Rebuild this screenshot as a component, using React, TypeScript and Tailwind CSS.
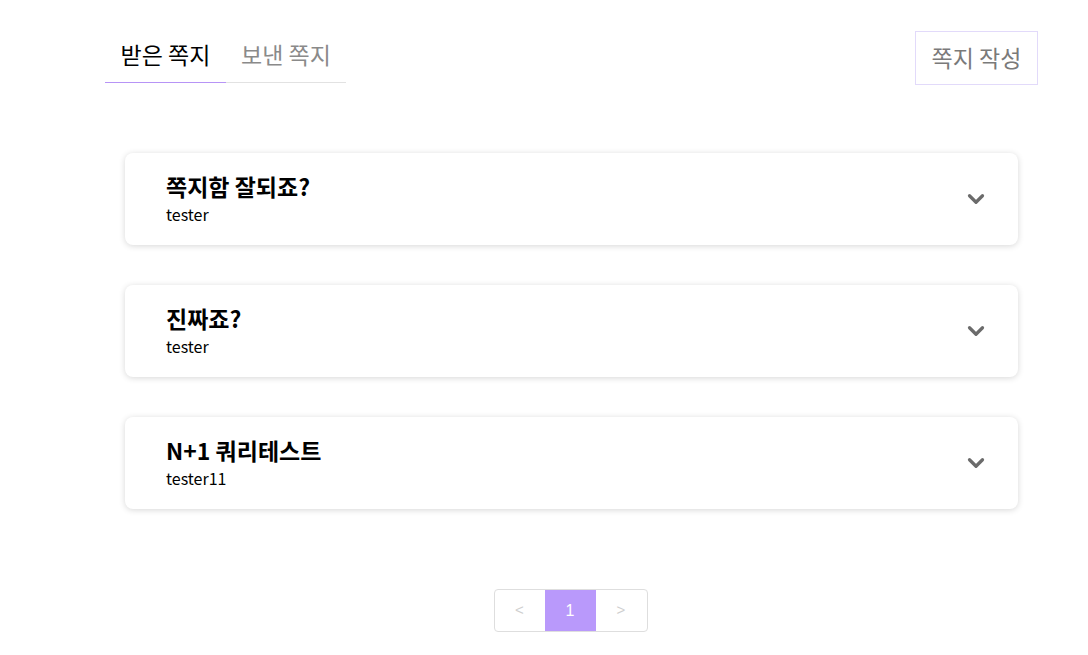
import { ChevronDown } from 'lucide-react'

const messages = [
  { title: '쪽지함 잘되죠?', sender: 'tester' },
  { title: '진짜죠?', sender: 'tester' },
  { title: 'N+1 쿼리테스트', sender: 'tester11' },
]

export default function App() {
  return (
    <div className="min-h-[655px] bg-white font-['Noto_Sans_CJK_KR',sans-serif] text-black">
      <div className="ml-[105px] w-[933px] pt-[31px]">
        {/* Tabs + write button */}
        <div className="flex items-start justify-between">
          <div className="flex">
            <button className="w-[121px] h-[52px] border-b border-[#b794f6] text-[23px] leading-[30px] text-black flex justify-center items-start pt-[8px]">
              받은 쪽지
            </button>
            <button className="w-[120px] h-[52px] border-b border-[#e2e2e2] text-[23px] leading-[30px] text-[#8a8a8a] flex justify-center items-start pt-[8px]">
              보낸 쪽지
            </button>
          </div>
          <button className="w-[123px] h-[54px] border border-[#e2dafa] text-[23px] leading-[30px] text-[#7a7a7a] pb-[3px]">
            쪽지 작성
          </button>
        </div>

        {/* Message list */}
        <div className="mt-[68px] px-[20px] flex flex-col gap-[40px]">
          {messages.map((m) => (
            <div
              key={m.title}
              className="h-[92px] rounded-[8px] bg-white shadow-[0_1px_6px_rgba(0,0,0,0.16)] flex items-center justify-between pl-[41px] pr-[29px]"
            >
              <div className="flex flex-col gap-[7px]">
                <span className="text-[23px] font-bold leading-[22px]">{m.title}</span>
                <span className="text-[16px] leading-[20px]">{m.sender}</span>
              </div>
              <ChevronDown className="w-[26px] h-[26px] text-[#6b6b6b]" strokeWidth={3} />
            </div>
          ))}
        </div>

        {/* Pagination */}
        <div className="mt-[80px] flex justify-center pr-[2px]">
          <div className="flex h-[43px] rounded-[4px] border border-[#dedede] overflow-hidden font-['Liberation_Sans',sans-serif]">
            <button className="w-[50px] text-[15px] text-[#cfcfcf]">&lt;</button>
            <button className="w-[51px] bg-[#b999fb] text-[16px] text-white">1</button>
            <button className="w-[51px] text-[15px] text-[#cfcfcf]">&gt;</button>
          </div>
        </div>
      </div>
    </div>
  )
}
